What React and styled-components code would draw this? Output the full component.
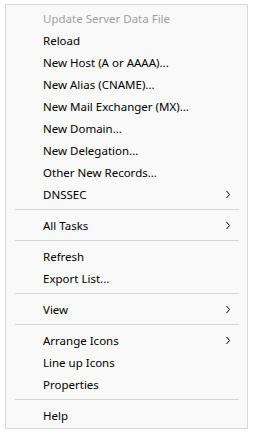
import React from 'react';
import styled, { createGlobalStyle } from 'styled-components';

const GlobalStyle = createGlobalStyle`
	html, body {
		margin: 0;
		padding: 0;
		background: #ffffff;
	}
	body {
		font-family: 'Noto Sans', 'Liberation Sans', sans-serif;
	}
`;

const Page = styled.div`
	padding: 4px 0 0 5px;
`;

const Menu = styled.ul`
	list-style: none;
	margin: 0;
	width: 241px;
	padding: 2px 0;
	background: #f9f9f9;
	border: 1px solid #d9d9d9;
	box-sizing: content-box;
`;

const Item = styled.li`
	display: flex;
	align-items: center;
	height: 22px;
	padding: 0 16px 0 37px;
	font-size: 11.5px;
	color: ${({ disabled }) => (disabled ? '#a0a0a0' : '#000000')};
	white-space: nowrap;
`;

const Label = styled.span`
	flex: 1;
`;

const Separator = styled.li`
	height: 1px;
	margin: 4px 8px 4px 9px;
	background: #d7d7d7;
`;

const Chevron = () => (
	<svg width='6' height='9' viewBox='0 0 6 9' fill='none'>
		<path d='M1.5 1 L4.5 4.5 L1.5 8' stroke='#000' strokeWidth='1' />
	</svg>
);

const menu = [
	{ label: 'Update Server Data File', disabled: true },
	{ label: 'Reload' },
	{ label: 'New Host (A or AAAA)...' },
	{ label: 'New Alias (CNAME)...' },
	{ label: 'New Mail Exchanger (MX)...' },
	{ label: 'New Domain...' },
	{ label: 'New Delegation...' },
	{ label: 'Other New Records...' },
	{ label: 'DNSSEC', sub: true },
	'-',
	{ label: 'All Tasks', sub: true },
	'-',
	{ label: 'Refresh' },
	{ label: 'Export List...' },
	'-',
	{ label: 'View', sub: true },
	'-',
	{ label: 'Arrange Icons', sub: true },
	{ label: 'Line up Icons' },
	{ label: 'Properties' },
	'-',
	{ label: 'Help' },
];

export default function App() {
	return (
		<Page>
			<GlobalStyle />
			<Menu>
				{menu.map((item, index) =>
					item === '-' ? (
						<Separator key={index} />
					) : (
						<Item key={index} disabled={item.disabled}>
							<Label>{item.label}</Label>
							{item.sub && <Chevron />}
						</Item>
					)
				)}
			</Menu>
		</Page>
	);
}
